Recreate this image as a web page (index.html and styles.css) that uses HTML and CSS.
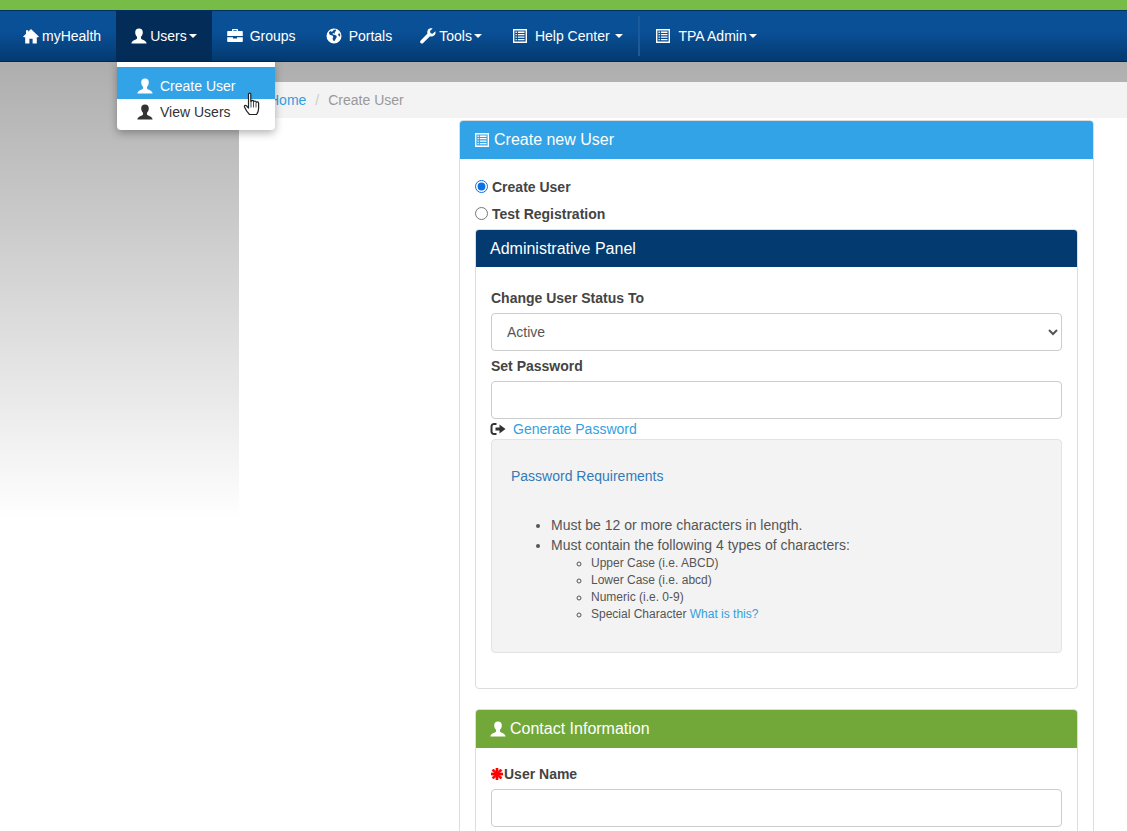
FILE: index.html
```html
<!doctype html>
<html lang="en">
  <head>
    <meta charset="UTF-8" />
    <title>Create User</title>
    <link rel="stylesheet" href="styles.css">
  </head>
  <body>
    <svg class="icon-defs" width="0" height="0">
      <symbol id="i-user" viewBox="0 0 16 16">
        <path d="M8 .5c2.500 0 3.800 1.600 3.800 3.900 0 1.900-.9 3.400-1.800 4.300v1.800c.6 1.400 5.200 1.600 5.600 5H.4c.4-3.400 5-3.600 5.600-5V8.700C5.100 7.800 4.200 6.300 4.200 4.400 4.200 2.100 5.500.5 8 .5z" />
      </symbol>
      <symbol id="i-home" viewBox="0 0 16 16">
        <path d="M8 1 16 8.800 15 9.300H13.800V15.500H9.600V10.800H6.400V15.500H2.200V9.300H1L0 8.800 3 5.800V2.200H5.200V3.700z" />
      </symbol>
      <symbol id="i-briefcase" viewBox="0 0 16 16">
        <path fill-rule="evenodd" d="M5 3V1.800C5 1.300 5.300 1 5.800 1h4.400c.5 0 .8.300.8.800V3h4c.5 0 .8.300.8.800V8H.2V3.800C.2 3.300.5 3 1 3zm1.300 0h3.400V2.300H6.300zM.2 9.200h5.800V10.500h4V9.200h5.800v4c0 .5-.3.8-.8.8H1c-.5 0-.8-.3-.8-.8z" />
      </symbol>
      <symbol id="i-globe" viewBox="0 0 16 16">
        <path fill-rule="evenodd" d="M8 .5a7.500 7.500 0 1 1 0 15 7.500 7.500 0 0 1 0-15zM4.500 3 3 4.200l.3 2 1.700 1 1.500.3.800 1.500-.8 1.500 1 2.500 1.200-.3 1.300-2.500.8-1.200-.5-1.500-2-.8-1.300-.3-.5-1 1-.5.5.7 1-.2-.3-1.400 1.300-1L9.800 1.600 7.500 2 6.800 3.200 5.500 3.800zM12 6l.8 2 1.200.700.300-1.900-.8-1.500z" />
      </symbol>
      <symbol id="i-wrench" viewBox="0 0 16 16">
        <path d="M15.300 3.200 12.700 5.800 10.500 5.300 10 3.100 12.600.5C10.700-.1 8.900.5 8 1.700 7.200 2.800 7 4.300 7.500 5.600L.7 12.400c-.8.800-.8 1.900-.1 2.600.7.800 1.900.8 2.600 0L10 8.200c1.400.5 2.900.3 4-.6 1.300-1 1.900-2.700 1.300-4.400z" />
      </symbol>
      <symbol id="i-list" viewBox="0 0 16 16">
        <path fill-rule="evenodd" d="M1 1h14v14H1zm1.400 1.400v11.200h11.200V2.400zM3.500 3.600h1.300v1.300H3.500zm2.400 0h6.600v1.300H5.900zM3.500 6h1.300v1.300H3.500zM5.900 6h6.600v1.300H5.900zM3.500 8.500h1.300v1.300H3.500zM5.900 8.500h6.600v1.300H5.900zM3.500 11h1.300v1.300H3.500zM5.900 11h6.600v1.300H5.900z" />
      </symbol>
      <symbol id="i-logout" viewBox="0 0 16 16">
        <path d="M6.500 2H4C2 2 .5 3.500.5 5.500v5C.5 12.500 2 14 4 14h2.500v-2H4c-.9 0-1.500-.6-1.500-1.500v-5C2.500 4.600 3.100 4 4 4h2.500zM9.500 3.500v3h-4v3h4v3L15.500 8z" />
      </symbol>
      <symbol id="i-asterisk" viewBox="0 0 12 12">
        <path d="M5 0h2v3.600L9.500 1 11 2.500 8.400 5H12v2H8.400L11 9.500 9.500 11 7 8.400V12H5V8.400L2.500 11 1 9.500 3.600 7H0V5h3.600L1 2.500 2.500 1 5 3.600z" />
      </symbol>
    </svg>

    <div class="topbar"></div>

    <nav class="navbar">
      <a class="nav-item" href="#"><svg class="icon nav-icon-tight"><use href="#i-home" /></svg>myHealth</a>
      <a class="nav-item active" href="#"><svg class="icon nav-icon-tight"><use href="#i-user" /></svg>Users<span class="caret"></span></a>
      <a class="nav-item" href="#"><svg class="icon nav-icon"><use href="#i-briefcase" /></svg>Groups</a>
      <a class="nav-item" href="#"><svg class="icon nav-icon"><use href="#i-globe" /></svg>Portals</a>
      <a class="nav-item nav-tools" href="#"><svg class="icon nav-icon-tight"><use href="#i-wrench" /></svg>Tools<span class="caret"></span></a>
      <a class="nav-item" href="#"><svg class="icon nav-icon"><use href="#i-list" /></svg>Help Center <span class="caret"></span></a>
      <div class="nav-divider"></div>
      <a class="nav-item" href="#"><svg class="icon nav-icon"><use href="#i-list" /></svg>TPA Admin<span class="caret"></span></a>

      <ul class="dropdown">
        <li class="dropdown-item selected"><svg class="icon"><use href="#i-user" /></svg>Create User</li>
        <li class="dropdown-item"><svg class="icon"><use href="#i-user" /></svg>View Users</li>
      </ul>
    </nav>

    <div class="page">
      <div class="main">
        <div class="breadcrumb">
          <a href="#">Home</a>
          <span class="crumb-sep">/</span>
          <span class="crumb-current">Create User</span>
        </div>

        <div class="panel panel-create">
          <div class="panel-heading heading-blue"><svg class="icon"><use href="#i-list" /></svg>Create new User</div>
          <div class="panel-body create-body">
            <div class="radio-row">
              <input type="radio" name="mode" checked />
              <label>Create User</label>
            </div>
            <div class="radio-row">
              <input type="radio" name="mode" />
              <label>Test Registration</label>
            </div>

            <div class="panel panel-admin">
              <div class="panel-heading heading-navy">Administrative Panel</div>
              <div class="panel-body admin-body">
                <label class="field-label">Change User Status To</label>
                <select class="field-input field-select">
                  <option>Active</option>
                </select>
                <label class="field-label label-password">Set Password</label>
                <input class="field-input" type="password" />
                <div class="generate">
                  <svg class="icon"><use href="#i-logout" /></svg>
                  <a href="#">Generate Password</a>
                </div>
                <div class="well">
                  <div class="well-title">Password Requirements</div>
                  <ul class="req-list">
                    <li>Must be 12 or more characters in length.</li>
                    <li>Must contain the following 4 types of characters:
                      <ul class="req-sublist">
                        <li>Upper Case (i.e. ABCD)</li>
                        <li>Lower Case (i.e. abcd)</li>
                        <li>Numeric (i.e. 0-9)</li>
                        <li>Special Character <a href="#">What is this?</a></li>
                      </ul>
                    </li>
                  </ul>
                </div>
              </div>
            </div>

            <div class="panel panel-contact">
              <div class="panel-heading heading-green"><svg class="icon"><use href="#i-user" /></svg>Contact Information</div>
              <div class="panel-body contact-body">
                <label class="field-label"><svg class="icon required"><use href="#i-asterisk" /></svg>User Name</label>
                <input class="field-input" type="text" />
              </div>
            </div>
          </div>
        </div>
      </div>
    </div>

    <!-- cursor sits over the open menu in the screenshot -->
    <svg class="cursor" viewBox="0 0 18 24" width="18" height="24">
      <path d="M5.500 2c0-1.300 2.300-1.300 2.300 0v7.500l.4-.1c.2-1.300 2.200-1.300 2.400 0l.1.400c.3-1.100 2.200-1.100 2.400.2l.1.500c.4-.9 2.300-.8 2.400.5v5.500c0 3-1 4.500-2 6H6.500C5 21 3 18.500 1.500 15c-.5-1.200 1-2.200 2-1.200l2 2.200z" fill="#fff" stroke="#222" stroke-width="1.200" stroke-linejoin="round" />
      <path d="M8 10v5.500M10.500 10v5.500M13 11v4.500" fill="none" stroke="#222" stroke-width=".8" />
    </svg>
  </body>
</html>
```

FILE: styles.css
```css
* {
  box-sizing: border-box;
}

html,
body {
  height: 100%;
  margin: 0;
  overflow: hidden;
  background: #fff;
  font-family: 'Liberation Sans', Arial, sans-serif;
  font-size: 14px;
  color: #444;
}

a {
  color: #329fe0;
  text-decoration: none;
}

.icon-defs {
  position: absolute;
}

.icon {
  display: inline-block;
  width: 16px;
  height: 16px;
  fill: currentColor;
  flex: none;
}

.topbar {
  height: 10px;
  background: #77bc46;
}

/* Navbar */
.navbar {
  position: relative;
  display: flex;
  align-items: stretch;
  height: 52px;
  padding-left: 8px;
  border-top: 1px solid #03315f;
  border-bottom: 1px solid #03264b;
  background: linear-gradient(to bottom, #0a5097 0%, #0a5097 40%, #033a70 100%);
}

.nav-item {
  display: flex;
  align-items: center;
  padding: 0 15px;
  color: #fff;
  white-space: pre;
}

.nav-item.active {
  background: #042c59;
}

.nav-tools {
  margin-left: -2px;
}

.nav-icon-tight {
  margin-right: 3px;
}

.nav-icon {
  margin-right: 7px;
}

.caret {
  width: 0;
  height: 0;
  margin-left: 2px;
  border-top: 4px solid #fff;
  border-left: 4px solid transparent;
  border-right: 4px solid transparent;
}

.nav-divider {
  width: 2px;
  height: 40px;
  margin-top: 5px;
  background: #1d5a9c;
}

.dropdown {
  position: absolute;
  top: 51px;
  left: 117px;
  width: 158px;
  height: 68px;
  margin: 0;
  padding: 5px 0;
  list-style: none;
  background: #fff;
  border-radius: 0 0 4px 4px;
  box-shadow: 0 3px 8px rgba(0, 0, 0, 0.3);
}

.dropdown-item {
  display: flex;
  align-items: center;
  gap: 7px;
  height: 26px;
  padding: 0 20px;
  color: #333;
}

.dropdown-item.selected {
  height: 32px;
  padding-top: 5px;
  color: #fff;
  background: #32a3e6;
}

/* Page */
.page {
  height: calc(100vh - 62px);
  padding-top: 20px;
  background: linear-gradient(to bottom, #aeaeae 0%, #fff 100%) no-repeat;
  background-size: 100% 458px;
}

.main {
  height: 100%;
  margin-left: 239px;
  background: #fff;
}

.breadcrumb {
  display: flex;
  gap: 9px;
  height: 36px;
  align-items: center;
  padding-left: 30px;
  background: #f3f3f3;
  color: #999;
}

.crumb-sep {
  color: #ccc;
}

/* Panels */
.panel {
  border: 1px solid #ddd;
  border-radius: 4px;
  background: #fff;
}

.panel-create {
  width: 635px;
  margin: 2px 0 0 220px;
}

.panel-heading {
  display: flex;
  align-items: center;
  padding-left: 14px;
  border-radius: 3px 3px 0 0;
  color: #fff;
  font-size: 16px;
}

.panel-heading .icon {
  margin-right: 4px;
}

.heading-blue {
  height: 38px;
  background: #32a3e6;
}

.heading-navy {
  height: 37px;
  background: #033a70;
}

.heading-green {
  height: 38px;
  background: #72a83a;
}

.panel-body {
  padding: 15px;
}

.create-body {
  padding-top: 14px;
}

.radio-row {
  display: flex;
  align-items: center;
  height: 27px;
  font-weight: 700;
}

.radio-row input {
  width: 13px;
  height: 13px;
  margin: 0 4px 0 0;
  accent-color: #0a6fe8;
}

.panel-admin {
  margin-top: 2px;
  height: 460px;
}

.admin-body {
  padding-top: 23px;
}

.field-label {
  display: block;
  margin-bottom: 7px;
  font-weight: 700;
}

.label-password {
  margin-top: 7px;
}

.field-input {
  display: block;
  width: 100%;
  height: 38px;
  padding: 6px 12px;
  border: 1px solid #ccc;
  border-radius: 4px;
  background: #fff;
  font-family: inherit;
  font-size: 14px;
  color: #555;
}

.field-select {
  padding-left: 11px;
}

.generate {
  display: flex;
  align-items: center;
  gap: 7px;
  height: 20px;
  margin-left: -1px;
  color: #333;
}

.well {
  height: 214px;
  padding: 28px 19px;
  border: 1px solid #e3e3e3;
  border-radius: 4px;
  background: #f3f3f3;
  color: #555;
}

.well-title {
  color: #337ab7;
}

.req-list {
  margin: 31px 0 0;
  padding-left: 40px;
}

.req-list li {
  line-height: 20px;
}

.req-sublist {
  margin: 0;
  padding-left: 40px;
  font-size: 12px;
  list-style: circle;
}

.req-sublist li {
  line-height: 17px;
}

.panel-contact {
  margin-top: 20px;
}

.contact-body {
  padding-top: 18px;
}

.required {
  width: 12px;
  height: 12px;
  margin-right: 1px;
  color: #f00;
  stroke: #f00;
  stroke-width: 0.7;
  vertical-align: -1px;
}

.cursor {
  position: absolute;
  top: 92px;
  left: 243px;
}
```
